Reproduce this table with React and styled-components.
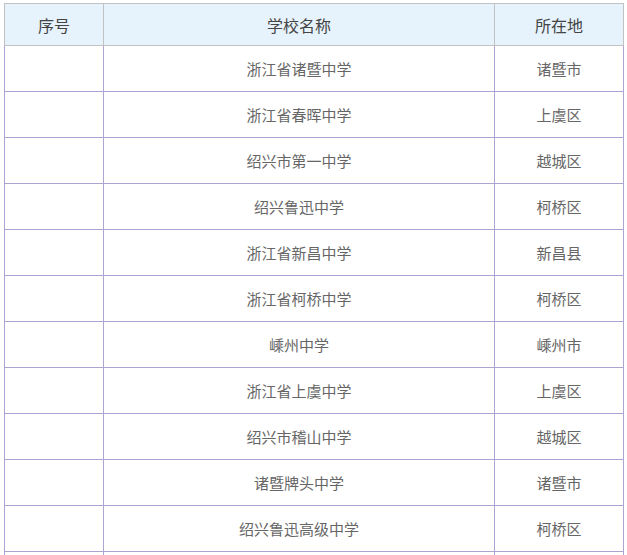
import React from 'react';
import styled, { createGlobalStyle } from 'styled-components';

const GlobalStyle = createGlobalStyle`
  html, body {
    margin: 0;
    padding: 0;
    background: #fff;
  }
  body {
    font-family: "Liberation Sans", "Noto Sans CJK SC", sans-serif;
  }
`;

const Wrap = styled.div`
  padding: 3px 4px 0 4px;
`;

const Table = styled.table`
  border-collapse: collapse;
  width: 620px;
  table-layout: fixed;
`;

const Col = styled.col`
  width: ${(p) => p.$w}px;
`;

const HeadCell = styled.th`
  height: 41px;
  padding: 0;
  background: #e6f3fc;
  border: 1px solid #c2c2c2;
  font-weight: normal;
  font-size: 16px;
  color: #444;
  text-align: center;
  vertical-align: middle;
`;

const Cell = styled.td`
  height: 45px;
  padding: 0;
  border: 1px solid #aba3d2;
  font-size: 15px;
  color: #666;
  text-align: center;
  vertical-align: middle;
`;

const schools = [
  ['浙江省诸暨中学', '诸暨市'],
  ['浙江省春晖中学', '上虞区'],
  ['绍兴市第一中学', '越城区'],
  ['绍兴鲁迅中学', '柯桥区'],
  ['浙江省新昌中学', '新昌县'],
  ['浙江省柯桥中学', '柯桥区'],
  ['嵊州中学', '嵊州市'],
  ['浙江省上虞中学', '上虞区'],
  ['绍兴市稽山中学', '越城区'],
  ['诸暨牌头中学', '诸暨市'],
  ['绍兴鲁迅高级中学', '柯桥区'],
  ['', ''],
];

export default function App() {
  return (
    <>
      <GlobalStyle />
      <Wrap>
        <Table>
          <colgroup>
            <Col $w={99} />
            <Col $w={391} />
            <Col $w={129} />
          </colgroup>
          <thead>
            <tr>
              <HeadCell>序号</HeadCell>
              <HeadCell>学校名称</HeadCell>
              <HeadCell>所在地</HeadCell>
            </tr>
          </thead>
          <tbody>
            {schools.map(([name, area], i) => (
              <tr key={i}>
                <Cell></Cell>
                <Cell>{name}</Cell>
                <Cell>{area}</Cell>
              </tr>
            ))}
          </tbody>
        </Table>
      </Wrap>
    </>
  );
}
